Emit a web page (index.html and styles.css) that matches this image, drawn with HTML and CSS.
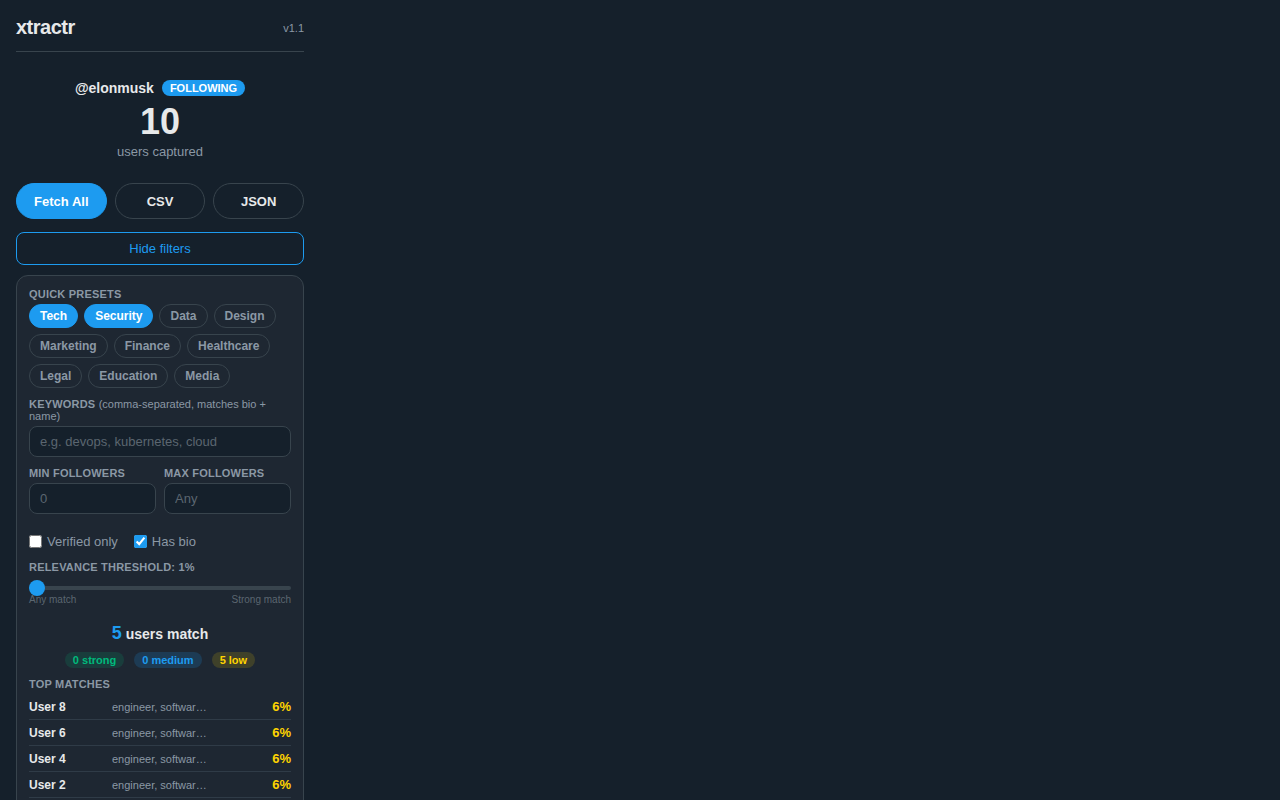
FILE: index.html
```html
<!DOCTYPE html>
<html>
<head>
<meta charset="utf-8">
<link rel="stylesheet" href="styles.css">
</head>
<body>
<div class="app">
  <header class="header">
    <h1 class="logo">xtractr</h1>
    <span class="version">v1.1</span>
  </header>

  <section class="profile">
    <div class="profile-line">
      <span class="handle">@elonmusk</span>
      <span class="badge">FOLLOWING</span>
    </div>
    <div class="count">10</div>
    <div class="count-label">users captured</div>
  </section>

  <div class="actions">
    <button class="btn btn-primary">Fetch All</button>
    <button class="btn btn-outline">CSV</button>
    <button class="btn btn-outline">JSON</button>
  </div>

  <button class="toggle">Hide filters</button>

  <section class="filters">
    <div class="label">QUICK PRESETS</div>
    <div class="chips">
      <span class="chip active">Tech</span>
      <span class="chip active">Security</span>
      <span class="chip">Data</span>
      <span class="chip">Design</span>
      <span class="chip">Marketing</span>
      <span class="chip">Finance</span>
      <span class="chip">Healthcare</span>
      <span class="chip">Legal</span>
      <span class="chip">Education</span>
      <span class="chip">Media</span>
    </div>

    <div class="label kw-label">KEYWORDS <span class="hint">(comma-separated, matches bio + name)</span></div>
    <input class="input" type="text" placeholder="e.g. devops, kubernetes, cloud">

    <div class="two-col">
      <div class="field">
        <div class="label">MIN FOLLOWERS</div>
        <input class="input" type="text" placeholder="0">
      </div>
      <div class="field">
        <div class="label">MAX FOLLOWERS</div>
        <input class="input" type="text" placeholder="Any">
      </div>
    </div>

    <div class="checks">
      <label class="check"><input type="checkbox"> Verified only</label>
      <label class="check"><input type="checkbox" checked> Has bio</label>
    </div>

    <div class="label">RELEVANCE THRESHOLD: 1%</div>
    <div class="slider">
      <div class="track"></div>
      <div class="thumb"></div>
    </div>
    <div class="slider-labels"><span>Any match</span><span>Strong match</span></div>

    <div class="match-count"><span class="num">5</span> users match</div>
    <div class="tiers">
      <span class="tier strong">0 strong</span>
      <span class="tier medium">0 medium</span>
      <span class="tier low">5 low</span>
    </div>

    <div class="label">TOP MATCHES</div>
    <ul class="matches">
      <li class="match"><span class="name">User 8</span><span class="kw">engineer, software, developer</span><span class="pct">6%</span></li>
      <li class="match"><span class="name">User 6</span><span class="kw">engineer, software, developer</span><span class="pct">6%</span></li>
      <li class="match"><span class="name">User 4</span><span class="kw">engineer, software, developer</span><span class="pct">6%</span></li>
      <li class="match"><span class="name">User 2</span><span class="kw">engineer, software, developer</span><span class="pct">6%</span></li>
      <li class="match"><span class="name">User 10</span><span class="kw">engineer, software, developer</span><span class="pct">6%</span></li>
    </ul>
  </section>

  <section class="recent">
    <div class="label">RECENTLY CAPTURED</div>
    <ul class="recent-list">
      <li>User 10</li>
      <li>User 9</li>
      <li>User 8</li>
      <li>User 7</li>
      <li>User 6</li>
    </ul>
  </section>
</div>
</body>
</html>
```

FILE: styles.css
```css
* { box-sizing: border-box; }

html {
  overflow-y: scroll;
}

html, body {
  margin: 0;
  padding: 0;
  background: #15202b;
}

::-webkit-scrollbar {
  width: 15px;
  background: #fafafa;
}

::-webkit-scrollbar-thumb {
  background: #8a8a8a;
  border-radius: 8px;
  border: 4px solid #fafafa;
}

body {
  font-family: "Liberation Sans", Arial, sans-serif;
  color: #e7e9ea;
}

.app {
  width: 320px;
  padding: 0 16px 40px;
}

.header {
  display: flex;
  justify-content: space-between;
  align-items: center;
  height: 52px;
  padding-top: 4px;
  border-bottom: 1px solid #38444d;
}

.logo {
  margin: 0;
  font-size: 20px;
  font-weight: 700;
  letter-spacing: -0.5px;
  color: #e7e9ea;
}

.version {
  font-size: 11px;
  color: #8b98a5;
}

.profile {
  display: flex;
  flex-direction: column;
  align-items: center;
  padding: 28px 0 0;
}

.profile-line {
  display: flex;
  align-items: center;
  gap: 8px;
}

.handle {
  font-size: 14px;
  font-weight: 700;
}

.badge {
  background: #1d9bf0;
  color: #fff;
  font-size: 11px;
  font-weight: 700;
  padding: 2px 8px;
  border-radius: 9px;
  line-height: 12px;
}

.count {
  font-size: 36px;
  font-weight: 700;
  line-height: 40px;
  margin-top: 6px;
}

.count-label {
  font-size: 13px;
  color: #8b98a5;
  margin-top: 2px;
}

.actions {
  display: grid;
  grid-template-columns: 1fr 1fr 1fr;
  gap: 8px;
  margin-top: 24px;
}

.btn {
  height: 36px;
  border-radius: 18px;
  font-family: inherit;
  font-size: 13px;
  font-weight: 700;
  color: #e7e9ea;
  cursor: pointer;
}

.btn-primary {
  background: #1d9bf0;
  border: 1px solid #1d9bf0;
  color: #fff;
}

.btn-outline {
  background: transparent;
  border: 1px solid #38444d;
}

.toggle {
  display: block;
  width: 100%;
  height: 33px;
  margin-top: 13px;
  background: transparent;
  border: 1px solid #1d9bf0;
  border-radius: 8px;
  color: #1d9bf0;
  font-family: inherit;
  font-size: 13px;
}

.filters {
  margin-top: 10px;
  background: #1e2732;
  border: 1px solid #38444d;
  border-radius: 12px;
  padding: 12px 12px 14px;
}

.label {
  font-size: 11px;
  font-weight: 700;
  color: #8b98a5;
  letter-spacing: 0.2px;
  line-height: 13px;
}

.hint {
  font-weight: 400;
  letter-spacing: 0;
}

.chips {
  display: flex;
  flex-wrap: wrap;
  gap: 6px;
  margin-top: 3px;
}

.chip {
  height: 24px;
  line-height: 22px;
  padding: 0 10px;
  border: 1px solid #38444d;
  border-radius: 12px;
  font-size: 12px;
  font-weight: 700;
  color: #8b98a5;
}

.chip.active {
  background: #1d9bf0;
  border-color: #1d9bf0;
  color: #fff;
}

.kw-label {
  margin-top: 10px;
  line-height: 12px;
}

.input {
  display: block;
  width: 100%;
  height: 31px;
  margin-top: 4px;
  padding: 0 10px;
  background: #15202b;
  border: 1px solid #38444d;
  border-radius: 8px;
  color: #e7e9ea;
  font-family: inherit;
  font-size: 13px;
  outline: none;
}

.input::placeholder {
  color: #5b6670;
}

.two-col {
  display: grid;
  grid-template-columns: 1fr 1fr;
  gap: 8px;
  margin-top: 10px;
}

.two-col .input {
  margin-top: 3px;
}

.checks {
  display: flex;
  gap: 16px;
  margin-top: 20px;
}

.check {
  display: flex;
  align-items: center;
  gap: 5px;
  font-size: 13px;
  color: #8b98a5;
}

.check input {
  margin: 0;
  width: 13px;
  height: 13px;
  accent-color: #1d9bf0;
}

.checks + .label {
  margin-top: 12px;
}

.slider {
  position: relative;
  height: 16px;
  margin-top: 6px;
}

.track {
  position: absolute;
  left: 0;
  right: 0;
  top: 6px;
  height: 4px;
  border-radius: 2px;
  background: #38444d;
}

.thumb {
  position: absolute;
  left: 0;
  top: 0;
  width: 16px;
  height: 16px;
  border-radius: 50%;
  background: #1d9bf0;
}

.slider-labels {
  display: flex;
  justify-content: space-between;
  font-size: 10px;
  color: #5b6670;
  margin-top: -2px;
}

.match-count {
  text-align: center;
  font-size: 14px;
  font-weight: 700;
  margin-top: 18px;
}

.match-count .num {
  font-size: 18px;
  color: #1d9bf0;
}

.tiers {
  display: flex;
  justify-content: center;
  gap: 10px;
  margin-top: 8px;
}

.tier {
  font-size: 11px;
  font-weight: 700;
  padding: 2px 8px;
  border-radius: 8px;
  line-height: 12px;
}

.tier.strong { color: #00ba7c; background: rgba(0, 186, 124, 0.15); }
.tier.medium { color: #1d9bf0; background: rgba(29, 155, 240, 0.18); }
.tier.low { color: #ffd400; background: rgba(255, 212, 0, 0.15); }

.tiers + .label {
  margin-top: 10px;
}

.matches {
  list-style: none;
  margin: 3px 0 0;
  padding: 0;
}

.match {
  display: flex;
  align-items: center;
  height: 26px;
  border-bottom: 1px solid #2f3b47;
}

.match .name {
  width: 83px;
  font-size: 12px;
  font-weight: 700;
  color: #e7e9ea;
}

.match .kw {
  width: 96px;
  font-size: 11px;
  color: #8b98a5;
  white-space: nowrap;
  overflow: hidden;
  text-overflow: ellipsis;
}

.match .pct {
  margin-left: auto;
  font-size: 13px;
  font-weight: 700;
  color: #ffd400;
}

.recent {
  margin-top: 16px;
  padding: 12px;
  border: 1px solid #38444d;
  border-radius: 12px;
}

.recent-list {
  list-style: none;
  margin: 6px 0 0;
  padding: 0;
}

.recent-list li {
  font-size: 12px;
  padding: 7px 0;
  border-bottom: 1px solid #2f3b47;
}
```
